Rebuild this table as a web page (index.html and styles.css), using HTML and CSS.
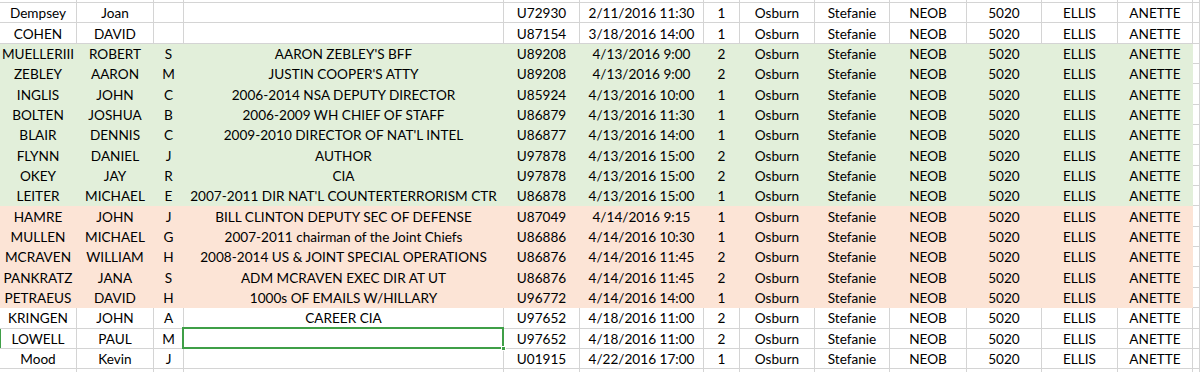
FILE: index.html
```html
<!DOCTYPE html>
<html>
<head>
<meta charset="utf-8">
<link rel="stylesheet" href="styles.css">
</head>
<body>
<div class="sheet">
  <div class="row edge"><div class="c"></div><div class="c"></div><div class="c"></div><div class="c"></div><div class="c"></div><div class="c"></div><div class="c"></div><div class="c"></div><div class="c"></div><div class="c"></div><div class="c"></div><div class="c"></div><div class="c"></div><div class="c"></div></div>

  <div class="row"><div class="c">Dempsey</div><div class="c">Joan</div><div class="c"></div><div class="c"></div><div class="c">U72930</div><div class="c">2/11/2016 11:30</div><div class="c">1</div><div class="c">Osburn</div><div class="c">Stefanie</div><div class="c">NEOB</div><div class="c">5020</div><div class="c">ELLIS</div><div class="c">ANETTE</div><div class="c"></div></div>
  <div class="row"><div class="c">COHEN</div><div class="c">DAVID</div><div class="c"></div><div class="c"></div><div class="c">U87154</div><div class="c">3/18/2016 14:00</div><div class="c">1</div><div class="c">Osburn</div><div class="c">Stefanie</div><div class="c">NEOB</div><div class="c">5020</div><div class="c">ELLIS</div><div class="c">ANETTE</div><div class="c"></div></div>

  <div class="row green"><div class="c">MUELLERIII</div><div class="c">ROBERT</div><div class="c">S</div><div class="c">AARON ZEBLEY'S BFF</div><div class="c">U89208</div><div class="c">4/13/2016 9:00</div><div class="c">2</div><div class="c">Osburn</div><div class="c">Stefanie</div><div class="c">NEOB</div><div class="c">5020</div><div class="c">ELLIS</div><div class="c">ANETTE</div><div class="c"></div></div>
  <div class="row green"><div class="c">ZEBLEY</div><div class="c">AARON</div><div class="c">M</div><div class="c">JUSTIN COOPER'S ATTY</div><div class="c">U89208</div><div class="c">4/13/2016 9:00</div><div class="c">2</div><div class="c">Osburn</div><div class="c">Stefanie</div><div class="c">NEOB</div><div class="c">5020</div><div class="c">ELLIS</div><div class="c">ANETTE</div><div class="c"></div></div>
  <div class="row green"><div class="c">INGLIS</div><div class="c">JOHN</div><div class="c">C</div><div class="c">2006-2014 NSA DEPUTY DIRECTOR</div><div class="c">U85924</div><div class="c">4/13/2016 10:00</div><div class="c">1</div><div class="c">Osburn</div><div class="c">Stefanie</div><div class="c">NEOB</div><div class="c">5020</div><div class="c">ELLIS</div><div class="c">ANETTE</div><div class="c"></div></div>
  <div class="row green"><div class="c">BOLTEN</div><div class="c">JOSHUA</div><div class="c">B</div><div class="c">2006-2009 WH CHIEF OF STAFF</div><div class="c">U86879</div><div class="c">4/13/2016 11:30</div><div class="c">1</div><div class="c">Osburn</div><div class="c">Stefanie</div><div class="c">NEOB</div><div class="c">5020</div><div class="c">ELLIS</div><div class="c">ANETTE</div><div class="c"></div></div>
  <div class="row green"><div class="c">BLAIR</div><div class="c">DENNIS</div><div class="c">C</div><div class="c">2009-2010 DIRECTOR OF NAT'L INTEL</div><div class="c">U86877</div><div class="c">4/13/2016 14:00</div><div class="c">1</div><div class="c">Osburn</div><div class="c">Stefanie</div><div class="c">NEOB</div><div class="c">5020</div><div class="c">ELLIS</div><div class="c">ANETTE</div><div class="c"></div></div>
  <div class="row green"><div class="c">FLYNN</div><div class="c">DANIEL</div><div class="c">J</div><div class="c">AUTHOR</div><div class="c">U97878</div><div class="c">4/13/2016 15:00</div><div class="c">2</div><div class="c">Osburn</div><div class="c">Stefanie</div><div class="c">NEOB</div><div class="c">5020</div><div class="c">ELLIS</div><div class="c">ANETTE</div><div class="c"></div></div>
  <div class="row green"><div class="c">OKEY</div><div class="c">JAY</div><div class="c">R</div><div class="c">CIA</div><div class="c">U97878</div><div class="c">4/13/2016 15:00</div><div class="c">2</div><div class="c">Osburn</div><div class="c">Stefanie</div><div class="c">NEOB</div><div class="c">5020</div><div class="c">ELLIS</div><div class="c">ANETTE</div><div class="c"></div></div>
  <div class="row green"><div class="c">LEITER</div><div class="c">MICHAEL</div><div class="c">E</div><div class="c">2007-2011 DIR NAT'L COUNTERTERRORISM CTR</div><div class="c">U86878</div><div class="c">4/13/2016 15:00</div><div class="c">1</div><div class="c">Osburn</div><div class="c">Stefanie</div><div class="c">NEOB</div><div class="c">5020</div><div class="c">ELLIS</div><div class="c">ANETTE</div><div class="c"></div></div>

  <div class="row peach"><div class="c">HAMRE</div><div class="c">JOHN</div><div class="c">J</div><div class="c">BILL CLINTON DEPUTY SEC OF DEFENSE</div><div class="c">U87049</div><div class="c">4/14/2016 9:15</div><div class="c">1</div><div class="c">Osburn</div><div class="c">Stefanie</div><div class="c">NEOB</div><div class="c">5020</div><div class="c">ELLIS</div><div class="c">ANETTE</div><div class="c"></div></div>
  <div class="row peach"><div class="c">MULLEN</div><div class="c">MICHAEL</div><div class="c">G</div><div class="c">2007-2011 chairman of the Joint Chiefs</div><div class="c">U86886</div><div class="c">4/14/2016 10:30</div><div class="c">1</div><div class="c">Osburn</div><div class="c">Stefanie</div><div class="c">NEOB</div><div class="c">5020</div><div class="c">ELLIS</div><div class="c">ANETTE</div><div class="c"></div></div>
  <div class="row peach"><div class="c">MCRAVEN</div><div class="c">WILLIAM</div><div class="c">H</div><div class="c">2008-2014 US &amp; JOINT SPECIAL OPERATIONS</div><div class="c">U86876</div><div class="c">4/14/2016 11:45</div><div class="c">2</div><div class="c">Osburn</div><div class="c">Stefanie</div><div class="c">NEOB</div><div class="c">5020</div><div class="c">ELLIS</div><div class="c">ANETTE</div><div class="c"></div></div>
  <div class="row peach"><div class="c">PANKRATZ</div><div class="c">JANA</div><div class="c">S</div><div class="c">ADM MCRAVEN EXEC DIR AT UT</div><div class="c">U86876</div><div class="c">4/14/2016 11:45</div><div class="c">2</div><div class="c">Osburn</div><div class="c">Stefanie</div><div class="c">NEOB</div><div class="c">5020</div><div class="c">ELLIS</div><div class="c">ANETTE</div><div class="c"></div></div>
  <div class="row peach"><div class="c">PETRAEUS</div><div class="c">DAVID</div><div class="c">H</div><div class="c">1000s OF EMAILS W/HILLARY</div><div class="c">U96772</div><div class="c">4/14/2016 14:00</div><div class="c">1</div><div class="c">Osburn</div><div class="c">Stefanie</div><div class="c">NEOB</div><div class="c">5020</div><div class="c">ELLIS</div><div class="c">ANETTE</div><div class="c"></div></div>

  <div class="row"><div class="c">KRINGEN</div><div class="c">JOHN</div><div class="c">A</div><div class="c">CAREER CIA</div><div class="c">U97652</div><div class="c">4/18/2016 11:00</div><div class="c">2</div><div class="c">Osburn</div><div class="c">Stefanie</div><div class="c">NEOB</div><div class="c">5020</div><div class="c">ELLIS</div><div class="c">ANETTE</div><div class="c"></div></div>
  <div class="row active"><div class="c">LOWELL</div><div class="c">PAUL</div><div class="c">M</div><div class="c selected"></div><div class="c">U97652</div><div class="c">4/18/2016 11:00</div><div class="c">2</div><div class="c">Osburn</div><div class="c">Stefanie</div><div class="c">NEOB</div><div class="c">5020</div><div class="c">ELLIS</div><div class="c">ANETTE</div><div class="c"></div></div>
  <div class="row"><div class="c">Mood</div><div class="c">Kevin</div><div class="c">J</div><div class="c"></div><div class="c">U01915</div><div class="c">4/22/2016 17:00</div><div class="c">1</div><div class="c">Osburn</div><div class="c">Stefanie</div><div class="c">NEOB</div><div class="c">5020</div><div class="c">ELLIS</div><div class="c">ANETTE</div><div class="c"></div></div>

  <div class="row"><div class="c"></div><div class="c"></div><div class="c"></div><div class="c"></div><div class="c"></div><div class="c"></div><div class="c"></div><div class="c"></div><div class="c"></div><div class="c"></div><div class="c"></div><div class="c"></div><div class="c"></div><div class="c"></div></div>
</div>
</body>
</html>
```

FILE: styles.css
```css
html, body {
  margin: 0;
  padding: 0;
  background: #ffffff;
  overflow: hidden;
}

.sheet {
  display: flex;
  flex-direction: column;
  width: 1200px;
  height: 372px;
  overflow: hidden;
  font-family: "Lato", "Liberation Sans", sans-serif;
  font-size: 13.6px;
  color: #000000;
}

.row {
  display: grid;
  grid-template-columns: 77px 77px 30px 320px 76px 124px 36px 75px 75px 77px 75px 76px 75px 1fr;
  height: 20.35px;
  flex: none;
}

.row.edge {
  height: 3px;
}

.c {
  box-sizing: border-box;
  border-right: 1px solid #d4d4d4;
  border-bottom: 1px solid #d4d4d4;
  display: flex;
  align-items: center;
  justify-content: center;
  white-space: nowrap;
  overflow: hidden;
  padding-top: 1px;
  position: relative;
}

.green .c {
  background: #e2efda;
  border-color: transparent;
}

.peach .c {
  background: #fce4d6;
  border-color: transparent;
}

.green .c:last-child,
.peach .c:last-child {
  background: #ffffff;
  border-color: #d4d4d4;
}

.active .c:first-child {
  box-shadow: inset 1px 0 0 #3f9f47;
}

.c.selected {
  overflow: visible;
}

.c.selected::after {
  content: "";
  position: absolute;
  left: -2px;
  top: -2px;
  right: -1px;
  bottom: -1px;
  border: 2px solid #3f9f47;
  z-index: 2;
}

.c.selected::before {
  content: "";
  position: absolute;
  right: -3px;
  bottom: -3px;
  width: 5px;
  height: 5px;
  background: #3f9f47;
  border: 1px solid #ffffff;
  box-sizing: border-box;
  z-index: 3;
}
```
